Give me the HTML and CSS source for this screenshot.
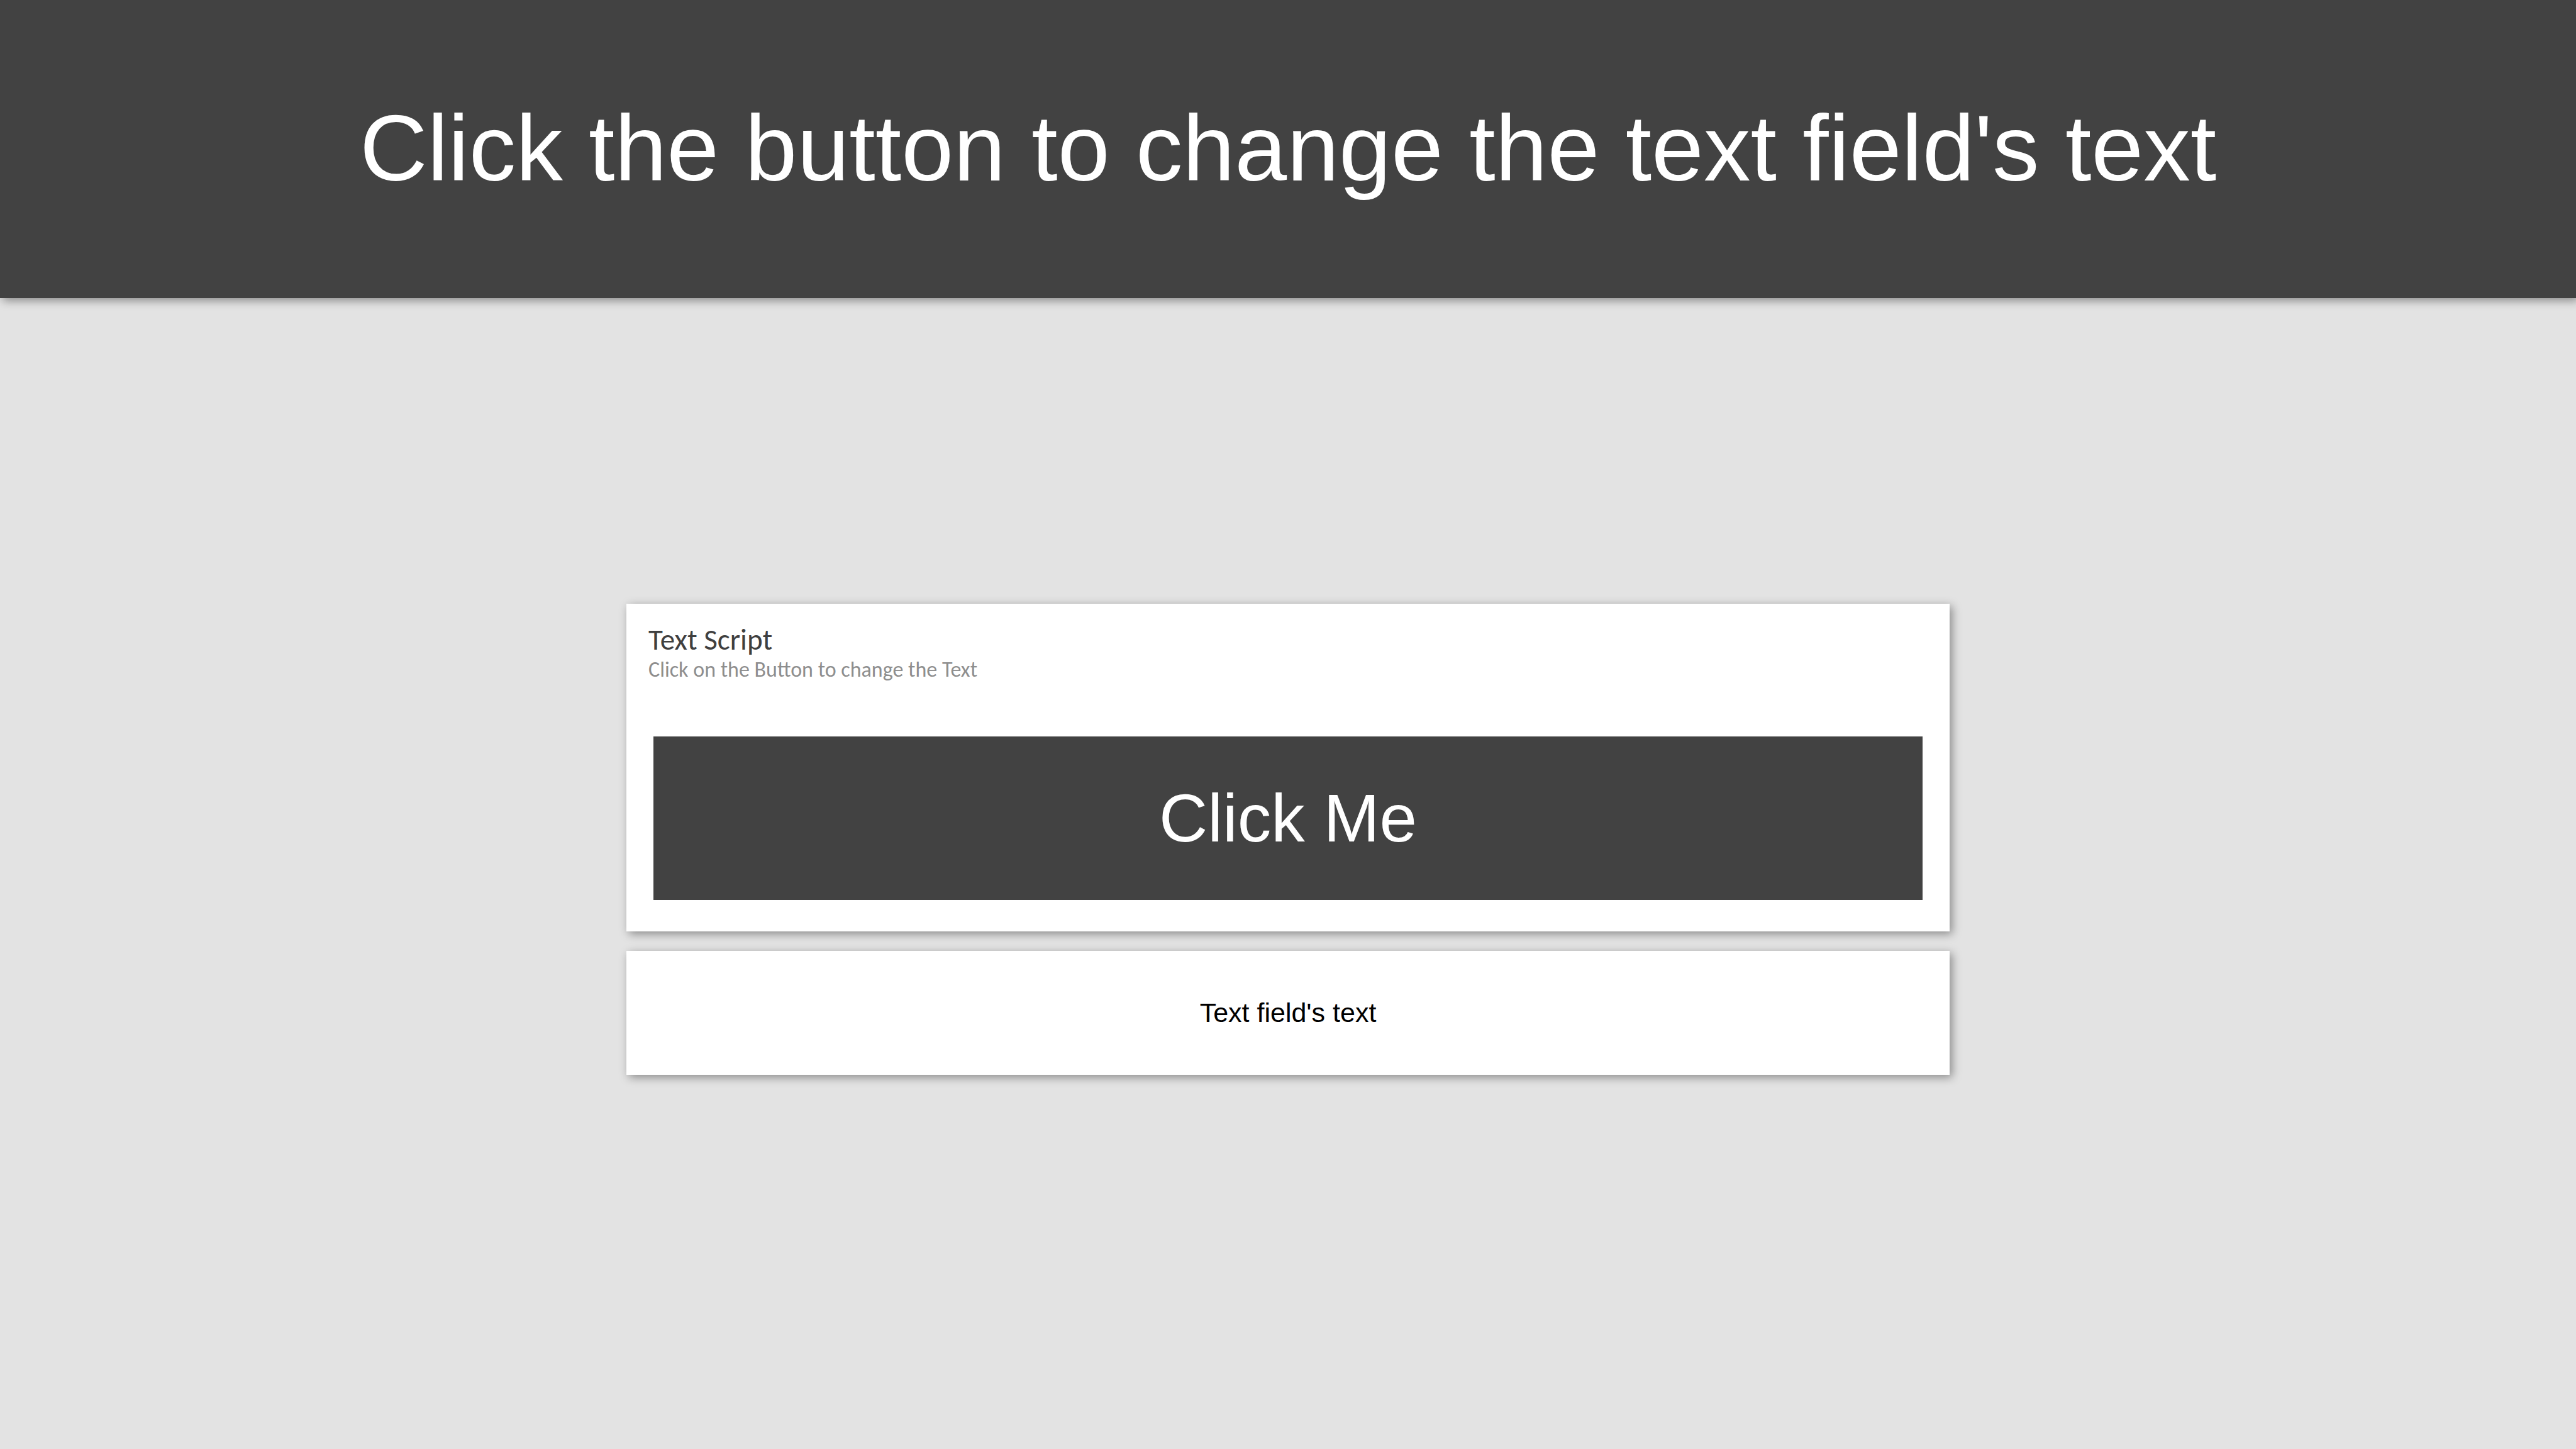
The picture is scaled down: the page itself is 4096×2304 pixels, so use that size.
FILE: index.html
```html
<!DOCTYPE html>
<html lang="en">
<head>
  <meta charset="utf-8">
  <meta name="viewport" content="width=device-width, initial-scale=1">
  <title>Text Script</title>
  <link rel="stylesheet" href="styles.css">
</head>
<body class="page">
  <header class="banner">
    <h1 class="banner-title">Click the button to change the text field's text</h1>
  </header>
  <main class="content">
    <section class="card script-card">
      <div class="card-heading">
        <h2 class="card-title">Text Script</h2>
        <p class="card-subtitle">Click on the Button to change the Text</p>
      </div>
      <button class="action" type="button">Click Me</button>
    </section>
    <input class="card text-field" type="text" aria-label="Text field" value="Text field's text">
  </main>
</body>
</html>
```
FILE: styles.css
```css
* {
  box-sizing: border-box;
}

.page {
  margin: 0;
  min-height: 100vh;
  background: #e3e3e3;
  font-family: "Liberation Sans", Arial, sans-serif;
}

.banner {
  padding: 150px 32px 152px;
  background: #424242;
  box-shadow: 4px 4px 14px rgba(0, 0, 0, 0.4);
}

.banner-title {
  margin: 0;
  color: #fff;
  font-size: 149px;
  font-weight: 400;
  line-height: 172px;
  text-align: center;
}

.content {
  display: flex;
  flex-direction: column;
  gap: 31px;
  width: 100%;
  max-width: 2104px;
  margin: 0 auto;
  padding: 486px 0 32px;
}

.card {
  width: 100%;
  background: #fff;
  box-shadow: 4px 4px 14px rgba(0, 0, 0, 0.4);
}

.script-card {
  display: flex;
  flex-direction: column;
  gap: 83px;
  padding: 34px 43px 50px;
}

.card-heading {
  margin-left: -8px;
  font-family: Carlito, Calibri, Lato, sans-serif;
}

.card-title,
.card-subtitle {
  margin: 0;
  font-weight: 400;
  line-height: 47px;
}

.card-title {
  color: #3f3f3f;
  font-size: 47px;
}

.card-subtitle {
  color: #8e8e8e;
  font-size: 34px;
}

.action {
  width: 100%;
  padding: 65px 32px;
  border: 0;
  background: #424242;
  color: #fff;
  font-family: inherit;
  font-size: 107px;
  line-height: 130px;
  cursor: pointer;
}

.text-field {
  padding: 74px 32px;
  border: 0;
  border-radius: 0;
  color: #000;
  font-family: inherit;
  font-size: 43px;
  line-height: 49px;
  text-align: center;
}
```
